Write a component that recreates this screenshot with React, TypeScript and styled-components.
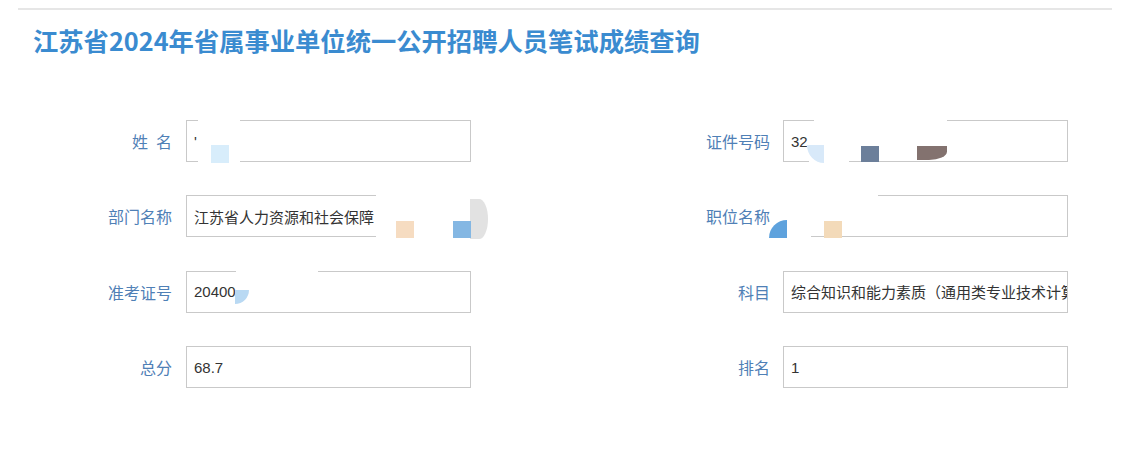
import * as React from "react";
import styled, { createGlobalStyle } from "styled-components";

const GlobalStyle = createGlobalStyle`
  html, body {
    margin: 0;
    padding: 0;
    background: #fff;
    font-family: "Microsoft YaHei", "Noto Sans CJK SC", "Liberation Sans", sans-serif;
  }
`;

const Page = styled.div`
  width: 1139px;
  height: 452px;
  padding: 8px 27px 0 18px;
  box-sizing: border-box;
`;

const Header = styled.div`
  border-top: 2px solid #e6e6e6;
  padding: 13px 0 0 15px;
`;

const Title = styled.h1`
  margin: 0;
  font-size: 25.3px;
  line-height: 34px;
  font-weight: bold;
  color: #3a8bd0;
  font-family: "Noto Sans CJK SC", "Liberation Sans", sans-serif;
`;

const Form = styled.div`
  display: grid;
  grid-template-columns: 385px 384px;
  column-gap: 213px;
  row-gap: 33.4px;
  padding: 63px 0 0 68px;
`;

const Field = styled.div`
  display: flex;
  align-items: center;
  position: relative;
`;

const Label = styled.label<{ $gap: number }>`
  width: 86px;
  margin-right: ${(p) => p.$gap}px;
  text-align: right;
  font-size: 16px;
  color: #4f80b6;
  white-space: pre;
  font-family: "Noto Sans CJK SC", sans-serif;
`;

const Input = styled.div`
  width: 285px;
  height: 42px;
  box-sizing: border-box;
  border: 1px solid #c9c9c9;
  padding: 0 7px;
  display: flex;
  align-items: center;
  font-size: 15px;
  color: #333;
  white-space: nowrap;
  overflow: hidden;
  font-family: "Liberation Sans", "Noto Sans CJK SC", sans-serif;
`;

// privacy masks drawn over the fields
const Mask = styled.div<{ $color?: string; $round?: string }>`
  position: absolute;
  background: ${(p) => p.$color || "#fff"};
  border-radius: ${(p) => p.$round || "0"};
`;

type MaskSpec = { x: number; y: number; w: number; h: number; color?: string; round?: string };

interface FieldSpec {
  label: string;
  value: string;
  gap: number;
  masks?: MaskSpec[];
}

const fields: FieldSpec[] = [
  {
    label: "姓\u2002名",
    value: "'",
    gap: 14,
    masks: [
      { x: 112, y: -3, w: 42, h: 48 },
      { x: 125, y: 25, w: 18, h: 18, color: "#d8edfb" },
    ],
  },
  {
    label: "证件号码",
    value: "32",
    gap: 13,
    masks: [
      { x: 130, y: -3, w: 133, h: 6 },
      { x: 125, y: 38, w: 40, h: 8 },
      { x: 123, y: 25, w: 17, h: 18, color: "#d8e9f9", round: "0 0 0 100%" },
      { x: 177, y: 26, w: 18, h: 16, color: "#6c7f9a" },
      { x: 233, y: 26, w: 30, h: 14, color: "#83726f", round: "0 0 60% 0" },
    ],
  },
  {
    label: "部门名称",
    value: "江苏省人力资源和社会保障",
    gap: 14,
    masks: [
      { x: 290, y: -3, w: 115, h: 48 },
      { x: 384, y: 4, w: 18, h: 40, color: "#e2e2e2", round: "0 100% 100% 0" },
      { x: 310, y: 26, w: 18, h: 17, color: "#f6dcc1" },
      { x: 367, y: 26, w: 18, h: 17, color: "#84b7e3" },
    ],
  },
  {
    label: "职位名称",
    value: "",
    gap: 13,
    masks: [
      { x: 84, y: -3, w: 110, h: 6 },
      { x: 97, y: 0, w: 30, h: 45 },
      { x: 85, y: 25, w: 18, h: 18, color: "#5ea2dd", round: "100% 0 0 0" },
      { x: 140, y: 26, w: 18, h: 17, color: "#f3dab9" },
    ],
  },
  {
    label: "准考证号",
    value: "20400",
    gap: 14,
    masks: [
      { x: 150, y: -3, w: 82, h: 6 },
      { x: 149, y: 19, w: 14, h: 14, color: "#b9d9f3", round: "0 0 100% 0" },
    ],
  },
  { label: "科目", value: "综合知识和能力素质（通用类专业技术计算机类）", gap: 13 },
  { label: "总分", value: "68.7", gap: 14 },
  { label: "排名", value: "1", gap: 13 },
];

export default function App() {
  return (
    <Page>
      <GlobalStyle />
      <Header>
        <Title>江苏省2024年省属事业单位统一公开招聘人员笔试成绩查询</Title>
      </Header>
      <Form>
        {fields.map((f) => (
          <Field key={f.label}>
            <Label $gap={f.gap}>{f.label}</Label>
            <Input>{f.value}</Input>
            {f.masks &&
              f.masks.map((m, i) => (
                <Mask
                  key={i}
                  $color={m.color}
                  $round={m.round}
                  style={{ left: m.x, top: m.y, width: m.w, height: m.h }}
                />
              ))}
          </Field>
        ))}
      </Form>
    </Page>
  );
}
